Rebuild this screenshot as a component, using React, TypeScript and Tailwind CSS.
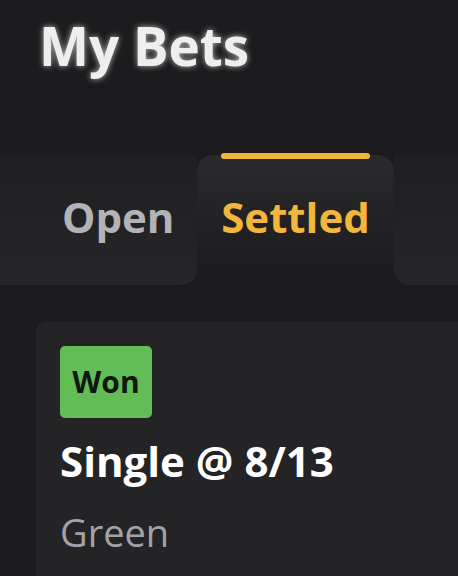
import React from "react";

export default function App() {
  const font = { fontFamily: '"Open Sans", "Noto Sans", sans-serif' };
  return (
    <div
      className="w-[458px] h-[576px] overflow-hidden bg-[#1b1a1d] flex flex-col"
      style={font}
    >
      <div className="h-[155px] pl-[39px] pt-[19px]">
        <h1 className="text-[53px] leading-none font-bold text-[#eeeeee] [text-shadow:0_0_6px_rgba(255,255,255,0.7)]">
          My Bets
        </h1>
      </div>
      <div className="flex h-[130px]">
        <div className="w-[197px] shrink-0 bg-gradient-to-b from-[#1f1e21] to-[#262528] rounded-br-[16px] flex items-center pl-[62px] pb-[6px]">
          <span className="text-[42px] leading-none font-bold text-[#b3b2b7]">Open</span>
        </div>
        <div className="relative w-[197px] shrink-0 rounded-t-[16px] bg-gradient-to-b from-[#2a292c] to-[#1b1a1d] flex items-center justify-center pb-[6px]">
          <div className="absolute left-[24px] right-[24px] top-[-2px] h-[6px] rounded-full bg-[#f2b63c]" />
          <span className="text-[42px] leading-none font-bold text-[#f2b63c]">Settled</span>
        </div>
        <div className="flex-1 bg-gradient-to-b from-[#1f1e21] to-[#262528] rounded-bl-[16px]" />
      </div>
      <div className="pl-[36px] pt-[37px] flex-1">
        <div className="h-full rounded-tl-[10px] bg-[#242326] pl-[24px] pt-[24px]">
          <div className="w-[92px] h-[72px] rounded-[5px] bg-[#63bd56] flex items-center justify-center">
            <span className="text-[30px] leading-none font-bold text-[#101810]">Won</span>
          </div>
          <div className="mt-[22px] text-[42px] leading-none font-bold text-white">
            Single @ 8/13
          </div>
          <div className="mt-[31px] text-[38px] leading-none text-[#a3a2a6]">Green</div>
        </div>
      </div>
    </div>
  );
}
